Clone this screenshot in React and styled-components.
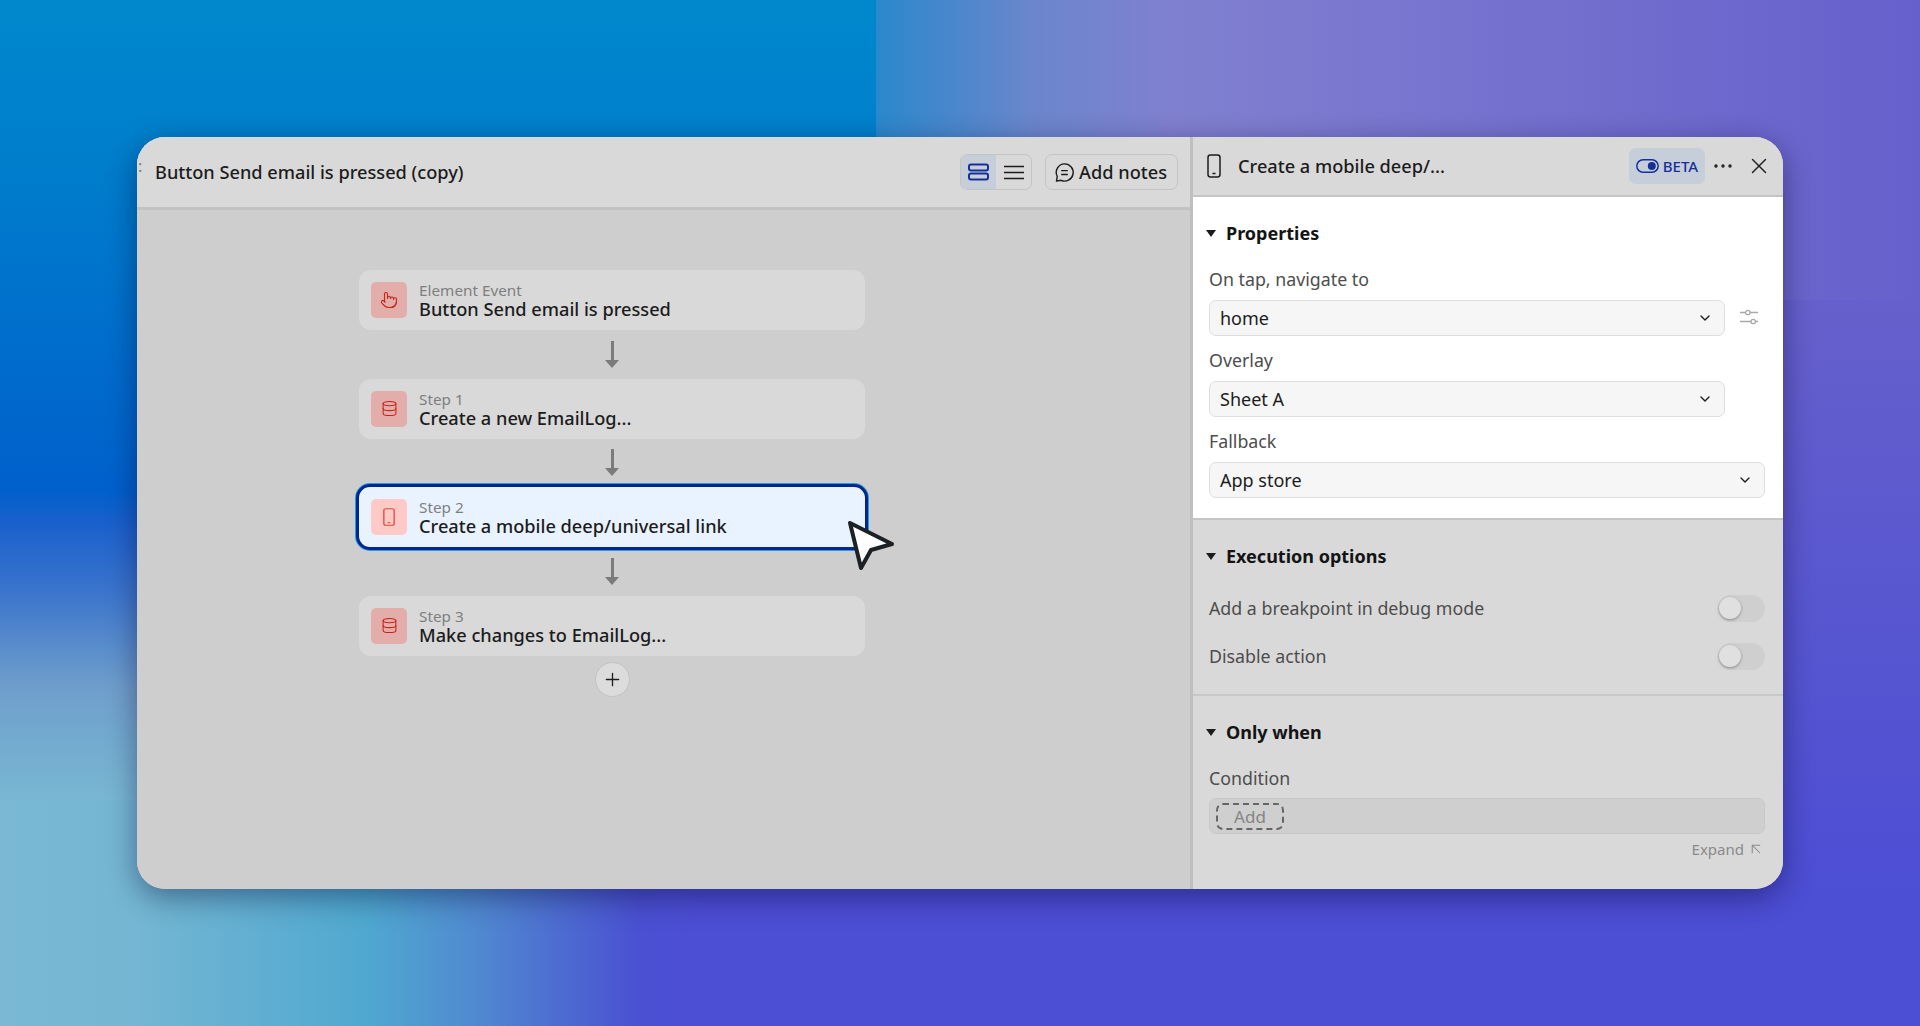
import React from 'react';
import styled, { createGlobalStyle } from 'styled-components';
import { ArrowUpLeft, ChevronDown, Database, Ellipsis, Plus, Pointer, X } from 'lucide-react';

const GlobalStyle = createGlobalStyle`
  html, body {
    margin: 0;
    padding: 0;
    font-family: 'Noto Sans', 'Open Sans', sans-serif;
    background: #4a48cf;
  }
  * {
    box-sizing: border-box;
  }
`;

function PhoneIcon({ width, height, color }) {
  return (
    <svg width={width} height={height} viewBox="0 0 14 24" fill="none" stroke={color} strokeWidth="1.5" preserveAspectRatio="none">
      <rect x="1" y="1" width="12" height="22" rx="2.4" />
      <path d="M5.5 19.5h3" />
    </svg>
  );
}

const StepPhone = () => <PhoneIcon width={12} height={18} color="#e5443c" />;
const StepPointer = () => <Pointer size={18} strokeWidth={1.5} color="#c8231c" />;
const StepDatabase = () => <Database size={17} strokeWidth={1.5} color="#c8231c" />;

const steps = [
  { id: 'event', label: 'Element Event', title: 'Button Send email is pressed', Icon: StepPointer },
  { id: 'one', label: 'Step 1', title: 'Create a new EmailLog...', Icon: StepDatabase },
  { id: 'two', label: 'Step 2', title: 'Create a mobile deep/universal link', Icon: StepPhone, active: true },
  { id: 'three', label: 'Step 3', title: 'Make changes to EmailLog...', Icon: StepDatabase },
];

function LayoutCardsIcon() {
  return (
    <svg width="21" height="18" viewBox="0 0 21 18" fill="none" stroke="#16309a" strokeWidth="2">
      <rect x="1" y="1.5" width="19" height="6" rx="2" />
      <rect x="1" y="10.5" width="19" height="6" rx="2" />
    </svg>
  );
}

function LayoutListIcon() {
  return (
    <svg width="20" height="15" viewBox="0 0 20 15" fill="none" stroke="#1c1c1c" strokeWidth="1.6">
      <path d="M0 1.5h20M0 7.5h20M0 13.5h20" />
    </svg>
  );
}

function NoteIcon() {
  return (
    <svg width="21" height="21" viewBox="0 0 22 22" fill="none" stroke="#1c1c1c" strokeWidth="1.5">
      <path d="M11 2a9 9 0 1 1-3.6 17.2L2.6 20l.8-4.8A9 9 0 0 1 11 2z" strokeLinejoin="round" />
      <path d="M7.5 9h7M7.5 13h7" />
    </svg>
  );
}

function TuneIcon() {
  return (
    <svg width="18" height="16" viewBox="0 0 18 16" fill="none" stroke="#a9a9a9" strokeWidth="1.3">
      <path d="M0 3.5h5.5M10 3.5h8M0 12.5h11M15.5 12.5H18" />
      <circle cx="7.8" cy="3.5" r="2.2" />
      <circle cx="13.2" cy="12.5" r="2.2" />
    </svg>
  );
}

function BetaToggleIcon() {
  return (
    <svg width="23" height="14" viewBox="0 0 23 14" fill="none">
      <rect x="0.8" y="0.8" width="21.4" height="12.4" rx="6.2" stroke="#16309a" strokeWidth="1.5" />
      <circle cx="15.8" cy="7" r="4" fill="#16309a" />
    </svg>
  );
}

function CursorIcon() {
  return (
    <svg width="48" height="51" viewBox="0 0 48 51">
      <path
        d="M3 3 L45 24 L24 30 L14 48 Z"
        fill="#ffffff"
        stroke="#1c2126"
        strokeWidth="4"
        strokeLinejoin="round"
      />
    </svg>
  );
}

export default function App() {
  return (
    <>
      <GlobalStyle />
      <Backdrop>
        <Window>
          <Editor>
            <EditorHeader>
              <DragHandle>:</DragHandle>
              <EditorTitle>Button Send email is pressed (copy)</EditorTitle>
              <ViewSwitch>
                <ViewOption $selected>
                  <LayoutCardsIcon />
                </ViewOption>
                <ViewOption>
                  <LayoutListIcon />
                </ViewOption>
              </ViewSwitch>
              <NotesButton>
                <NoteIcon />
                Add notes
              </NotesButton>
            </EditorHeader>
            <Canvas>
              <StepList>
                {steps.map((step, index) => (
                  <React.Fragment key={step.id}>
                    {index > 0 && (
                      <Connector>
                        <ConnectorLine />
                        <ConnectorHead />
                      </Connector>
                    )}
                    <StepCard $active={step.active}>
                      <StepIcon $active={step.active}>
                        <step.Icon />
                      </StepIcon>
                      <StepText>
                        <StepLabel>{step.label}</StepLabel>
                        <StepTitle>{step.title}</StepTitle>
                      </StepText>
                      {step.active && (
                        <Cursor>
                          <CursorIcon />
                        </Cursor>
                      )}
                    </StepCard>
                  </React.Fragment>
                ))}
                <AddStep>
                  <Plus size={21} strokeWidth={1.5} color="#1c1c1c" />
                </AddStep>
              </StepList>
            </Canvas>
          </Editor>
          <Inspector>
            <InspectorHeader>
              <PhoneIcon width={14} height={24} color="#1c1c1c" />
              <InspectorTitle>Create a mobile deep/...</InspectorTitle>
              <BetaChip>
                <BetaToggleIcon />
                BETA
              </BetaChip>
              <HeaderAction>
                <Ellipsis size={24} strokeWidth={1.4} />
              </HeaderAction>
              <HeaderAction>
                <X size={26} strokeWidth={1.3} />
              </HeaderAction>
            </InspectorHeader>

            <PropertiesSection>
              <SectionHeading>
                <Caret />
                Properties
              </SectionHeading>
              <FieldLabel>On tap, navigate to</FieldLabel>
              <SelectRow>
                <Select>
                  home
                  <ChevronDown size={16} strokeWidth={2} />
                </Select>
                <TuneIcon />
              </SelectRow>
              <FieldLabel>Overlay</FieldLabel>
              <SelectRow>
                <Select>
                  Sheet A
                  <ChevronDown size={16} strokeWidth={2} />
                </Select>
              </SelectRow>
              <FieldLabel>Fallback</FieldLabel>
              <Select>
                App store
                <ChevronDown size={16} strokeWidth={2} />
              </Select>
            </PropertiesSection>

            <OptionsSection>
              <SectionHeading>
                <Caret />
                Execution options
              </SectionHeading>
              <OptionRow>
                <OptionLabel>Add a breakpoint in debug mode</OptionLabel>
                <Toggle />
              </OptionRow>
              <OptionRow>
                <OptionLabel>Disable action</OptionLabel>
                <Toggle />
              </OptionRow>
            </OptionsSection>

            <ConditionSection>
              <SectionHeading>
                <Caret />
                Only when
              </SectionHeading>
              <FieldLabel>Condition</FieldLabel>
              <ConditionInput>
                <AddChip>Add</AddChip>
              </ConditionInput>
              <ExpandLink>
                Expand
                <ArrowUpLeft size={18} strokeWidth={1.4} />
              </ExpandLink>
            </ConditionSection>
          </Inspector>
        </Window>
      </Backdrop>
    </>
  );
}

const Backdrop = styled.div`
  width: 1920px;
  height: 1026px;
  overflow: hidden;
  padding: 137px;
  background:
    linear-gradient(90deg, #7ab8d3 0px, #74b6d3 137px, #4fa8d0 367px, #5088d0 480px, #4a50d2 640px, rgba(74, 80, 210, 0) 700px) 0 800px / 100% 226px no-repeat,
    linear-gradient(180deg, #0088cc 0px, #0080cc 137px, #0060cc 490px, #1a60cc 523px, #3a74cc 590px, #6f9ecc 687px, #78b7d3 800px) 0 0 / 876px 800px no-repeat,
    linear-gradient(90deg, #2a88cc 875px, #6a86cc 1030px, #8080d0 1170px, #6660cc 1920px) 0 0 / 100% 300px no-repeat,
    linear-gradient(180deg, #6660cc 300px, #4c4ed4 889px);
`;

const Window = styled.div`
  width: 1646px;
  height: 752px;
  display: flex;
  overflow: hidden;
  border-radius: 28px;
  background: #d9d9d9;
  box-shadow: 0 8px 30px rgba(0, 0, 40, 0.42);
`;

const Editor = styled.section`
  width: 1056px;
  flex: none;
  display: flex;
  flex-direction: column;
  border-right: 3px solid #bfbfbf;
  background: #cecece;
`;

const EditorHeader = styled.header`
  position: relative;
  height: 73px;
  flex: none;
  display: flex;
  align-items: center;
  padding: 0 12px 0 18px;
  background: #d9d9d9;
  border-bottom: 3px solid #c2c2c2;
`;

const DragHandle = styled.span`
  position: absolute;
  left: 1px;
  top: 18px;
  font-size: 16px;
  color: #7d7d7d;
`;

const EditorTitle = styled.h1`
  flex: 1;
  margin: 0;
  font-size: 18.2px;
  font-weight: 500;
  color: #1c1c1c;
`;

const ViewSwitch = styled.div`
  display: flex;
  height: 36px;
  margin-right: 13px;
  overflow: hidden;
  border: 1px solid #c4c4c4;
  border-radius: 7px;
`;

const ViewOption = styled.div`
  width: 35px;
  display: flex;
  align-items: center;
  justify-content: center;
  background: ${(props) => (props.$selected ? '#c6ced9' : 'transparent')};
`;

const NotesButton = styled.div`
  height: 36px;
  display: flex;
  align-items: center;
  gap: 4px;
  padding: 0 10px 0 8px;
  border: 1px solid #c4c4c4;
  border-radius: 7px;
  font-size: 18.2px;
  font-weight: 500;
  color: #1c1c1c;
`;

const Canvas = styled.div`
  flex: 1;
  padding: 60px 0 0 222px;
`;

const StepList = styled.div`
  width: 506px;
  display: flex;
  flex-direction: column;
  align-items: center;
`;

const StepCard = styled.div`
  position: relative;
  width: ${(props) => (props.$active ? '512px' : '506px')};
  height: ${(props) => (props.$active ? '66px' : '60px')};
  margin: ${(props) => (props.$active ? '-3px' : '0')};
  flex: none;
  display: flex;
  align-items: center;
  gap: 12px;
  padding: 0 12px;
  border-radius: ${(props) => (props.$active ? '14px' : '12px')};
  background: ${(props) => (props.$active ? '#e9f3ff' : '#d9d9d9')};
  border: ${(props) => (props.$active ? '3px solid #00278f' : 'none')};
  box-shadow: ${(props) => (props.$active ? '0 0 0 1px #2a9bd8' : 'none')};
`;

const StepIcon = styled.div`
  width: 36px;
  height: 36px;
  flex: none;
  display: flex;
  align-items: center;
  justify-content: center;
  border-radius: 5px;
  background: ${(props) => (props.$active ? '#ffc9c5' : '#e3aeaa')};
`;

const StepText = styled.div`
  display: flex;
  flex-direction: column;
`;

const StepLabel = styled.span`
  font-size: 15.3px;
  line-height: 18px;
  color: #7f7f7f;
`;

const StepTitle = styled.span`
  font-size: 18.2px;
  line-height: 20px;
  font-weight: 500;
  color: #1c1c1c;
`;

const Cursor = styled.div`
  position: absolute;
  right: -30px;
  top: 33px;
  line-height: 0;
`;

const Connector = styled.div`
  height: 48.5px;
  flex: none;
  display: flex;
  flex-direction: column;
  align-items: center;
  justify-content: center;
`;

const ConnectorLine = styled.div`
  width: 3px;
  height: 19px;
  background: #7b7b7b;
`;

const ConnectorHead = styled.div`
  width: 0;
  height: 0;
  border-left: 7px solid transparent;
  border-right: 7px solid transparent;
  border-top: 8px solid #7b7b7b;
`;

const AddStep = styled.div`
  width: 35px;
  height: 35px;
  margin-top: 6px;
  display: flex;
  align-items: center;
  justify-content: center;
  border: 1px solid #c2c2c2;
  border-radius: 50%;
  background: #dcdcdc;
`;

const Inspector = styled.aside`
  flex: 1;
  min-width: 0;
  display: flex;
  flex-direction: column;
  background: #d9d9d9;
`;

const InspectorHeader = styled.header`
  height: 60px;
  flex: none;
  display: flex;
  align-items: center;
  padding: 0 6px 0 14px;
  border-bottom: 2px solid #c4c4c4;
`;

const InspectorTitle = styled.h2`
  flex: 1;
  margin: 0 0 0 17px;
  font-size: 18.2px;
  font-weight: 500;
  color: #1c1c1c;
`;

const BetaChip = styled.div`
  width: 76px;
  height: 36px;
  display: flex;
  align-items: center;
  justify-content: center;
  gap: 4px;
  border-radius: 7px;
  background: #c6ced9;
  font-size: 15px;
  font-weight: 500;
  color: #16309a;
`;

const HeaderAction = styled.div`
  width: 36px;
  display: flex;
  align-items: center;
  justify-content: center;
  color: #1c1c1c;
`;

const PropertiesSection = styled.section`
  height: 323px;
  flex: none;
  padding: 23px 18px 0 16px;
  background: #ffffff;
  border-bottom: 2px solid #c4c4c4;
`;

const OptionsSection = styled.section`
  height: 176px;
  flex: none;
  padding: 23px 18px 0 16px;
  border-bottom: 2px solid #c8c8c8;
`;

const ConditionSection = styled.section`
  flex: 1;
  padding: 23px 18px 0 16px;
`;

const SectionHeading = styled.h3`
  height: 26px;
  margin: 0;
  display: flex;
  align-items: center;
  gap: 10px;
  font-size: 18px;
  font-weight: 700;
  color: #141414;
`;

const Caret = styled.span`
  width: 0;
  height: 0;
  margin-left: -3px;
  border-left: 5px solid transparent;
  border-right: 5px solid transparent;
  border-top: 7px solid #1c1c1c;
`;

const FieldLabel = styled.label`
  display: block;
  height: 26px;
  margin-top: 11px;
  font-size: 17.8px;
  line-height: 26px;
  color: #4d4d4d;

  ${SectionHeading} + & {
    margin-top: 20px;
  }
`;

const SelectRow = styled.div`
  width: 516px;
  position: relative;
  display: flex;
  align-items: center;

  & > svg {
    position: absolute;
    left: 531px;
    top: 17px;
  }
`;

const Select = styled.div`
  width: 100%;
  height: 36px;
  margin-top: 8px;
  display: flex;
  align-items: center;
  justify-content: space-between;
  padding: 0 11px 0 10px;
  border: 1px solid #dedede;
  border-radius: 7px;
  background: #f6f6f6;
  font-size: 18px;
  color: #1c1c1c;
`;

const OptionRow = styled.div`
  height: 48px;
  display: flex;
  align-items: center;
  justify-content: space-between;

  ${SectionHeading} + & {
    margin-top: 15px;
  }
`;

const OptionLabel = styled.span`
  font-size: 17.8px;
  color: #4d4d4d;
`;

const Toggle = styled.div`
  position: relative;
  width: 47px;
  height: 27px;
  border-radius: 14px;
  background: #cfcfcf;

  &::after {
    content: '';
    position: absolute;
    left: 1px;
    top: 2px;
    width: 22px;
    height: 22px;
    border-radius: 50%;
    background: #e0e0e0;
    box-shadow: 0 1px 3px rgba(0, 0, 0, 0.35);
  }
`;

const ConditionInput = styled.div`
  height: 36px;
  margin-top: 7px;
  display: flex;
  align-items: center;
  padding-left: 6px;
  border: 1px solid #c8c8c8;
  border-radius: 7px;
  background: #cfcfcf;
`;

const AddChip = styled.div`
  width: 68px;
  height: 27px;
  display: flex;
  align-items: center;
  justify-content: center;
  border: 2px dashed #666666;
  border-radius: 7px;
  font-size: 17px;
  color: #858585;
`;

const ExpandLink = styled.div`
  margin-top: 5px;
  display: flex;
  align-items: center;
  justify-content: flex-end;
  gap: 3px;
  font-size: 15px;
  color: #8a8a8a;
`;
